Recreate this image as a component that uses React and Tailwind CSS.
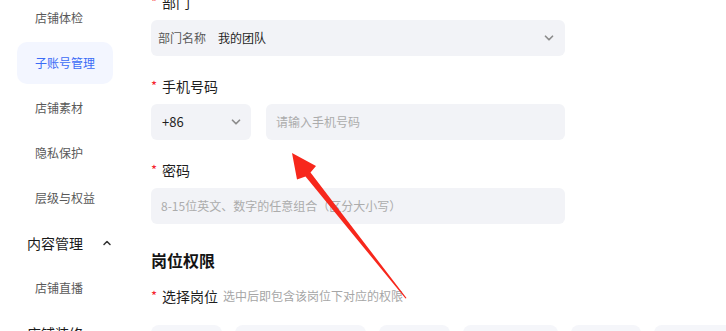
import React from 'react';
import { ChevronDown, ChevronUp } from 'lucide-react';

const font = { fontFamily: '"Noto Sans CJK SC", "Noto Sans", sans-serif' };

const navItems = [
    { label: '店铺体检', type: 'sub' },
    { label: '子账号管理', type: 'sub', active: true },
    { label: '店铺素材', type: 'sub' },
    { label: '隐私保护', type: 'sub' },
    { label: '层级与权益', type: 'sub' },
    { label: '内容管理', type: 'group' },
    { label: '店铺直播', type: 'sub' },
    { label: '店铺装修', type: 'group' },
];

const roleWidths = ['w-[71px]', 'w-[131px]', 'w-[71px]', 'w-[95px]', 'w-[70px]', 'w-[80px]'];

function Label({ children, className = '' }) {
    return (
        <div className={`flex items-center h-5 shrink-0 text-[14px] text-[#1f1f1f] ${className}`}>
            <span className="text-[#f5222d] mr-[5px] text-[13px]">*</span>
            {children}
        </div>
    );
}

function Arrow() {
    // red annotation arrow pointing at the phone input
    return (
        <svg className="absolute left-0 top-0 pointer-events-none" width="726" height="331" viewBox="0 0 726 331">
            <polygon
                points="292,153 316,166 310.5,172.5 406.5,298 405.5,298.5 305.5,176.5 297,179.5"
                fill="#f7271c"
            />
        </svg>
    );
}

export default function App() {
    return (
        <div className="relative w-[726px] h-[331px] overflow-hidden bg-white flex items-start" style={font}>
            {/* Sidebar */}
            <div className="w-[151px] shrink-0 flex flex-col gap-[3px] mt-[-3px]">
                {navItems.map((item) => (
                    <div key={item.label} className="px-[17px] shrink-0">
                        {item.type === 'group' ? (
                            <div className="h-[42px] w-[96px] flex items-center pl-[10px] justify-between text-[14px] text-[#1a1a1a]">
                                <span>{item.label}</span>
                                {item.label === '内容管理' && <ChevronUp className="w-3 h-3 text-[#333]" strokeWidth={3} />}
                            </div>
                        ) : (
                            <div
                                className={`h-[42px] w-[96px] flex items-center pl-[18px] rounded-[10px] text-[12px] ${
                                    item.active ? 'bg-[#f3f6ff] text-[#3b6cf6]' : 'text-[#595959]'
                                }`}
                            >
                                {item.label}
                            </div>
                        )}
                    </div>
                ))}
            </div>

            {/* Form */}
            <div className="w-[414px] shrink-0 flex flex-col mt-[-8px]">
                <Label className="mb-2">部门</Label>
                <div className="h-9 shrink-0 rounded-[6px] bg-[#f2f3f7] flex items-center justify-between pl-[7px] pr-[9px] text-[12px] mb-5">
                    <div className="flex items-center gap-[12px]">
                        <span className="text-[#595959]">部门名称</span>
                        <span className="text-[#1f1f1f]">我的团队</span>
                    </div>
                    <ChevronDown className="w-[14px] h-[14px] text-[#8c8c8c]" strokeWidth={3} />
                </div>

                <Label className="mb-2">手机号码</Label>
                <div className="flex gap-[15px] mb-5 shrink-0">
                    <div className="w-[100px] h-9 rounded-[6px] bg-[#f2f3f7] flex items-center justify-between pl-[11px] pr-[8px] text-[13px] text-[#1f1f1f]">
                        <span>+86</span>
                        <ChevronDown className="w-[14px] h-[14px] text-[#8c8c8c]" strokeWidth={3} />
                    </div>
                    <div className="flex-1 h-9 rounded-[6px] bg-[#f2f3f7] flex items-center pl-[10px] text-[12px] text-[#acacac]">
                        请输入手机号码
                    </div>
                </div>

                <Label className="mb-2">密码</Label>
                <div className="h-9 shrink-0 rounded-[6px] bg-[#f2f3f7] flex items-center pl-[10px] text-[12px] text-[#acacac] mb-6">
                    8-15位英文、数字的任意组合（区分大小写）
                </div>

                <div className="h-6 shrink-0 flex items-center text-[16px] font-bold text-[#141414] mb-[14px]">岗位权限</div>

                <div className="flex items-center h-5 shrink-0 mb-[19px]">
                    <Label>选择岗位</Label>
                    <span className="ml-[5px] text-[12px] text-[#a6a6a6]">选中后即包含该岗位下对应的权限</span>
                </div>

                <div className="flex gap-[13px] shrink-0">
                    {roleWidths.map((w, i) => (
                        <div key={i} className={`${w} shrink-0 h-9 rounded-[8px] bg-[#f5f6fa]`} />
                    ))}
                </div>
            </div>

            <Arrow />
        </div>
    );
}
